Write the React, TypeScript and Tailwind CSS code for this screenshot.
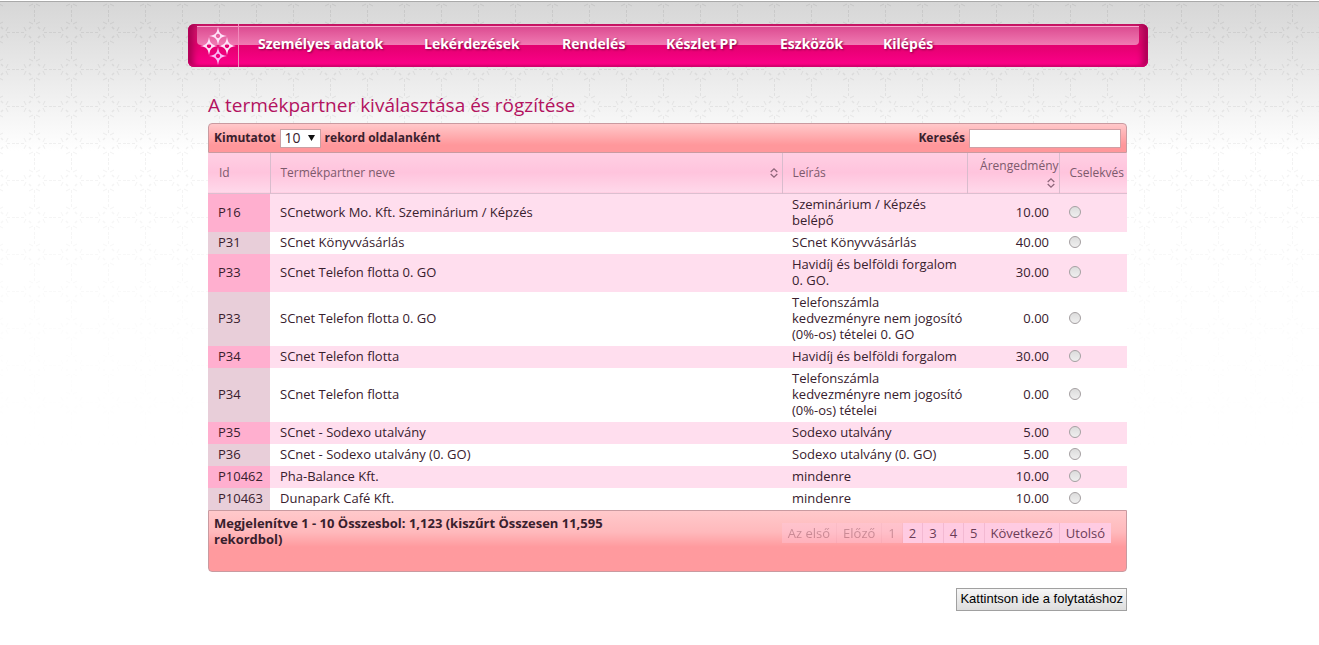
import React, { useState } from 'react';

const menuItems = [
  { label: 'Személyes adatok', width: 'w-[126px]' },
  { label: 'Lekérdezések', width: 'w-[98px]' },
  { label: 'Rendelés', width: 'w-[64px]' },
  { label: 'Készlet PP', width: 'w-[74px]' },
  { label: 'Eszközök', width: 'w-[63px]' },
  { label: 'Kilépés', width: 'w-[51px]' },
];

const partners = [
  { id: 'P16', name: 'SCnetwork Mo. Kft. Szeminárium / Képzés', lines: ['Szeminárium / Képzés', 'belépő'], discount: '10.00' },
  { id: 'P31', name: 'SCnet Könyvvásárlás', lines: ['SCnet Könyvvásárlás'], discount: '40.00' },
  { id: 'P33', name: 'SCnet Telefon flotta 0. GO', lines: ['Havidíj és belföldi forgalom', '0. GO.'], discount: '30.00' },
  { id: 'P33', name: 'SCnet Telefon flotta 0. GO', lines: ['Telefonszámla', 'kedvezményre nem jogosító', '(0%-os) tételei 0. GO'], discount: '0.00' },
  { id: 'P34', name: 'SCnet Telefon flotta', lines: ['Havidíj és belföldi forgalom'], discount: '30.00' },
  { id: 'P34', name: 'SCnet Telefon flotta', lines: ['Telefonszámla', 'kedvezményre nem jogosító', '(0%-os) tételei'], discount: '0.00' },
  { id: 'P35', name: 'SCnet - Sodexo utalvány', lines: ['Sodexo utalvány'], discount: '5.00' },
  { id: 'P36', name: 'SCnet - Sodexo utalvány (0. GO)', lines: ['Sodexo utalvány (0. GO)'], discount: '5.00' },
  { id: 'P10462', name: 'Pha-Balance Kft.', lines: ['mindenre'], discount: '10.00' },
  { id: 'P10463', name: 'Dunapark Café Kft.', lines: ['mindenre'], discount: '10.00' },
];

const pages = [
  { label: 'Az első', disabled: true },
  { label: 'Előző', disabled: true },
  { label: '1', disabled: true },
  { label: '2', disabled: false },
  { label: '3', disabled: false },
  { label: '4', disabled: false },
  { label: '5', disabled: false },
  { label: 'Következő', disabled: false },
  { label: 'Utolsó', disabled: false },
];

// four-pointed star with a hollow centre
const STAR = 'M0-9 Q1-3 3-2.200 L2.200-3 Q3-1 9 0 Q3 1 2.200 3 L3 2.200 Q1 3 0 9 Q-1 3-3 2.200 L-2.200 3 Q-3 1-9 0 Q-3-1-2.200-3 L-3-2.200 Q-1-3 0-9Z M0-2.200 A2.200 2.200 0 1 0 .01-2.200Z';

const Backdrop: React.FC = () => (
  <div className="absolute inset-x-0 top-0 -z-10 h-[460px] border-t border-white bg-linear-to-b from-[#d6d6d6] to-white to-[150px]">
    <svg className="h-full w-full border-t border-[#a9a9a9]" aria-hidden="true">
      <defs>
        <pattern id="lattice" width="37" height="37" patternUnits="userSpaceOnUse" x="16" y="12">
          <g fill="none" stroke="#8c8c8c" strokeOpacity="0.2">
            <path d="M18.500 0V9M18.500 28V37M0 18.500H9M28 18.500H37" strokeDasharray="3 2" />
            <path d="M13 8l4 2M24 8l-4 2M13 29l4-2M24 29l-4-2M8 13l2 4M8 24l2-4M29 13l-2 4M29 24l-2-4" />
            <path d="M15 13l-2 2M22 13l2 2M15 24l-2-2M22 24l2-2" strokeWidth="1.5" />
          </g>
        </pattern>
        <linearGradient id="fade" x1="0" y1="0" x2="0" y2="1">
          <stop offset="0" stopColor="#fff" />
          <stop offset="0.3" stopColor="#fff" stopOpacity="0.6" />
          <stop offset="0.7" stopColor="#fff" stopOpacity="0.15" />
          <stop offset="1" stopColor="#fff" stopOpacity="0" />
        </linearGradient>
        <mask id="fadeMask">
          <rect width="100%" height="100%" fill="url(#fade)" />
        </mask>
      </defs>
      <rect width="100%" height="100%" fill="url(#lattice)" mask="url(#fadeMask)" />
    </svg>
  </div>
);

const Logo: React.FC = () => (
  <svg width="36" height="40" viewBox="0 0 36 40" fill="#ffe3fa" fillRule="evenodd" aria-hidden="true">
    <path d={STAR} transform="translate(18 10)" />
    <path d={STAR} transform="translate(9 20)" />
    <path d={STAR} transform="translate(27 20)" />
    <path d={STAR} transform="translate(18 30)" fill="#fbb8f6" />
  </svg>
);

const SortIcon: React.FC = () => (
  <svg width="8" height="10" viewBox="0 0 8 10" fill="none" stroke="#8d6579" strokeWidth="1.3" aria-hidden="true">
    <path d="M.7 4 4 .9 7.300 4M.7 6 4 9.100 7.300 6" />
  </svg>
);

const headCell = 'border-r border-[#d9bccd] font-normal text-[#7c5a6c] last:border-r-0';

const App: React.FC = () => {
  const [selected, setSelected] = useState<number | null>(null);

  return (
    <div className="relative isolate min-h-screen bg-white pt-6 pl-[17px] font-['Trebuchet_MS','Open_Sans',sans-serif] text-[13px] leading-4 text-[#38202d]">
      <Backdrop />
      <div className="mx-auto max-w-[960px]">
        <nav className="relative rounded-md bg-linear-to-b from-[#c91868] via-[#e3006f] to-[#ff008c] shadow-[inset_0_-2px_2px_#d0006c,inset_9px_0_6px_-4px_#a80052,inset_-9px_0_6px_-4px_#a80052]">
          <div className="absolute inset-x-[9px] top-0.5 h-[19px] rounded-b border-t border-[#f9a5cd] bg-linear-to-b from-[#dc4b91] to-[#f07ab3]" />
          <div className="relative flex h-[43px] items-center px-[9px]">
            <div className="flex h-full w-[42px] items-center justify-center border-r border-[#f28abc]">
              <Logo />
            </div>
            <ul className="ml-[19px] flex gap-10 pb-[3px] text-[14px] font-bold whitespace-nowrap text-white [text-shadow:1px_1px_2px_#8c0048]">
              {menuItems.map((item) => (
                <li key={item.label} className={item.width}>
                  <a href="#">{item.label}</a>
                </li>
              ))}
            </ul>
          </div>
        </nav>

        <main className="pt-6 pr-[21px] pl-5">
          <h1 className="mb-1 text-[19px] leading-7 text-[#b3125f]">A termékpartner kiválasztása és rögzítése</h1>

          <div className="flex h-[30px] items-center justify-between rounded-t border border-[#c99aa0] bg-linear-to-b from-[#ffc8ca] to-[#ff979b] to-75% px-[5px] text-[12px] font-bold">
            <label className="flex items-center gap-1">
              Kimutatot
              <span className="relative">
                <select className="block h-[19px] w-[41px] appearance-none border border-[#c9a0a4] bg-white pl-1 text-[14px] leading-4 font-normal">
                  <option>10</option>
                  <option>25</option>
                  <option>50</option>
                </select>
                <svg className="pointer-events-none absolute top-1.5 right-1.5" width="7" height="6" viewBox="0 0 7 6" aria-hidden="true">
                  <path d="M0 0h7L3.500 6z" fill="#111" />
                </svg>
              </span>
              rekord oldalanként
            </label>
            <label className="flex items-center gap-1">
              Keresés
              <input type="text" className="h-[19px] w-[152px] border border-[#d0a0a6] bg-white px-1 font-normal" />
            </label>
          </div>

          <table className="w-full table-fixed border-collapse">
            <colgroup>
              <col className="w-[62px]" />
              <col />
              <col className="w-[185px]" />
              <col className="w-[92px]" />
              <col className="w-[68px]" />
            </colgroup>
            <thead>
              <tr className="h-10 border-b border-[#dcbfd0] bg-linear-to-b from-[#ffcfe3] via-[#ffc4dd] to-[#ffd8ea] text-left text-[12px]">
                <th className={`${headCell} pl-[11px]`}>Id</th>
                <th className={`${headCell} pr-1 pl-2.5`}>
                  <div className="flex items-center justify-between">
                    Termékpartner neve
                    <SortIcon />
                  </div>
                </th>
                <th className={`${headCell} pl-2.5`}>Leírás</th>
                <th className={`${headCell} pl-2.5`}>
                  <div className="flex flex-col items-end gap-1">
                    <span className="whitespace-nowrap">Árengedmény</span>
                    <span className="pr-1">
                      <SortIcon />
                    </span>
                  </div>
                </th>
                <th className={`${headCell} pl-2.5`}>Cselekvés</th>
              </tr>
            </thead>
            <tbody>
              {partners.map((partner, index) => (
                <tr key={index} className="group bg-white odd:bg-[#ffdeee]">
                  <td className="bg-[#e8ced9] pt-0.5 pb-1 pl-2.5 group-odd:bg-[#ffafcf]">{partner.id}</td>
                  <td className="pt-0.5 pb-1 pl-2.5">{partner.name}</td>
                  <td className="pt-0.5 pb-1 pl-2.5 whitespace-nowrap">
                    {partner.lines.map((line) => (
                      <div key={line}>{line}</div>
                    ))}
                  </td>
                  <td className="pt-0.5 pr-2.5 pb-1 text-right">{partner.discount}</td>
                  <td className="pt-0.5 pb-1 pl-2.5">
                    <input
                      type="radio"
                      name="partner"
                      aria-label={partner.name}
                      checked={selected === index}
                      onChange={() => setSelected(index)}
                      className="block size-3 appearance-none rounded-full border border-[#a5a0a2] bg-linear-to-b from-[#dcdcdc] to-[#efefef] checked:bg-[#555]"
                    />
                  </td>
                </tr>
              ))}
            </tbody>
          </table>

          <div className="flex h-[62px] items-start justify-between rounded-b border border-[#c99aa0] bg-linear-to-b from-[#ffc9cb] via-[#ffb9bc] via-35% to-[#ff9a9e] to-60% pt-1 pr-[15px] pl-[5px]">
            <p className="w-[430px] font-bold">
              Megjelenítve 1 - 10 Összesbol: 1,123 (kiszűrt Összesen 11,595
              <br />
              rekordbol)
            </p>
            <div className="mt-2 flex">
              {pages.map((page) => (
                <button
                  key={page.label}
                  disabled={page.disabled}
                  className="h-5 border-r border-[#f3b9d2] bg-[#ffcbe2] px-1.5 text-[#6b3d57] last:border-r-0 disabled:opacity-35"
                >
                  {page.label}
                </button>
              ))}
            </div>
          </div>

          <div className="mt-4 flex justify-end">
            <button className="h-[23px] border border-[#a0a0a0] bg-linear-to-b from-[#f6f6f6] to-[#dddddd] px-[3px] font-['Liberation_Sans',sans-serif] text-[13px] whitespace-nowrap text-black">
              Kattintson ide a folytatáshoz
            </button>
          </div>
        </main>
      </div>
    </div>
  );
};

export default App;
